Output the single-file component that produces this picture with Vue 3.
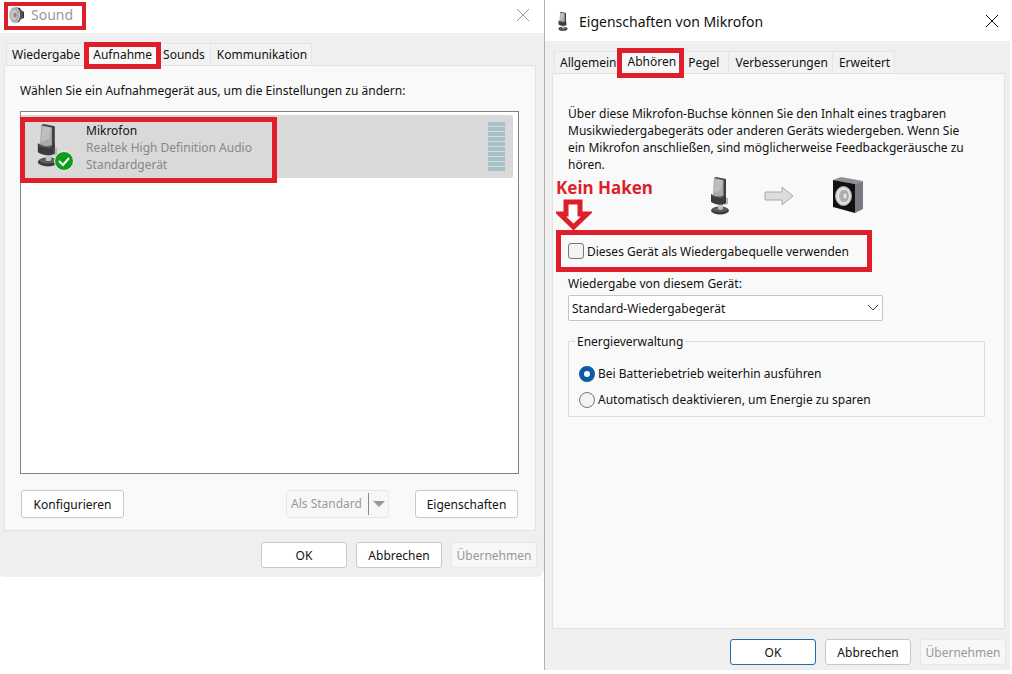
<script setup>
import { ref } from 'vue'

const leftTabs = ['Wiedergabe', 'Aufnahme', 'Sounds', 'Kommunikation']
const rightTabs = ['Allgemein', 'Abhören', 'Pegel', 'Verbesserungen', 'Erweitert']
const leftTab = ref('Aufnahme')
const rightTab = ref('Abhören')
const listen = ref(false)
const device = ref('Standard-Wiedergabegerät')
const power = ref('keep')
</script>

<template>
  <svg class="defs" aria-hidden="true">
    <symbol id="mic" viewBox="0 0 20 38">
      <ellipse cx="10" cy="33.500" rx="9" ry="4" fill="#3a3a3a" />
      <ellipse cx="10" cy="32.500" rx="7.500" ry="2.500" fill="#5c5c5c" />
      <path d="M8 25h5v7c-1 1-4 1-5 0z" fill="#c4c4c4" />
      <path d="M14 20l4 1v6l-4 1z" fill="#b5b5b5" />
      <path d="M4 1L6 0l10 2v19l-3 1z" fill="#3f3f3f" />
      <path d="M4 1l9.500 2v17L3 18z" fill="#a9a9a9" />
      <path d="M5 2l7.500 1.500L11 13l-7 3z" fill="#bebebe" />
      <path d="M1 17c4 2 8 3 12 2l3-1v8l-3 1.500C8 28 4 27 1 25z" fill="#3b3b3b" />
      <path d="M2 18.500c4 1.500 8 2 11 1.500" stroke="#6f6f6f" fill="none" />
    </symbol>
  </svg>
  <main class="desktop">
    <section class="window sound" aria-label="Sound">
      <header class="titlebar">
        <div class="title marked">
          <svg class="speaker-small" viewBox="0 0 16 18">
            <path d="M6 1l5 1 1 2 3 2v6l-3 1-2 3-4 1z" fill="#2f2f2f" />
            <path d="M11 3v11M13 5v7" stroke="#777" />
            <ellipse cx="5.500" cy="9" rx="5" ry="8" fill="#aaa" stroke="#d8d8d8" />
            <ellipse cx="5" cy="9" rx="3" ry="5.500" fill="#c8c8c8" />
            <ellipse cx="6" cy="9" rx="1.500" ry="2.500" fill="#888" />
          </svg>
          <h1>Sound</h1>
        </div>
        <button class="close" aria-label="Schließen"><svg viewBox="0 0 12 12"><path d="M0 0l12 12M12 0L0 12" /></svg></button>
      </header>
      <nav class="tabs">
        <button v-for="t in leftTabs" :key="t" class="tab" :class="{ active: t === leftTab }" @click="leftTab = t">{{ t }}</button>
      </nav>
      <div class="panel">
        <p class="hint">Wählen Sie ein Aufnahmegerät aus, um die Einstellungen zu ändern:</p>
        <div class="list">
          <div class="item">
            <div class="item-icon">
              <svg class="mic-list"><use href="#mic" /></svg>
              <svg class="check" viewBox="0 0 20 20"><circle cx="10" cy="10" r="9.500" fill="#119c1c" stroke="#e8f5e8" /><path d="M5 10l4 4 6-7" fill="none" stroke="#fff" stroke-width="2" /></svg>
            </div>
            <div class="item-text">
              <strong>Mikrofon</strong>
              <span>Realtek High Definition Audio</span>
              <span>Standardgerät</span>
            </div>
            <div class="meter"><i v-for="n in 10" :key="n"></i></div>
          </div>
        </div>
        <div class="actions">
          <button class="btn wide">Konfigurieren</button>
          <span class="grow"></span>
          <button class="btn wide split" disabled><span>Als Standard</span><i class="caret"></i></button>
          <button class="btn wide">Eigenschaften</button>
        </div>
      </div>
      <footer class="footer">
        <button class="btn">OK</button>
        <button class="btn">Abbrechen</button>
        <button class="btn" disabled>Übernehmen</button>
      </footer>
    </section>

    <section class="window props" aria-label="Eigenschaften von Mikrofon">
      <header class="titlebar">
        <div class="title">
          <svg class="mic-title"><use href="#mic" /></svg>
          <h1>Eigenschaften von Mikrofon</h1>
        </div>
        <button class="close" aria-label="Schließen"><svg viewBox="0 0 12 12"><path d="M0 0l12 12M12 0L0 12" /></svg></button>
      </header>
      <nav class="tabs">
        <button v-for="t in rightTabs" :key="t" class="tab" :class="{ active: t === rightTab }" @click="rightTab = t">{{ t }}</button>
      </nav>
      <div class="panel">
        <p class="intro">Über diese Mikrofon-Buchse können Sie den Inhalt eines tragbaren Musikwiedergabegeräts oder anderen Geräts wiedergeben. Wenn Sie ein Mikrofon anschließen, sind möglicherweise Feedbackgeräusche zu hören.</p>
        <div class="flow">
          <svg class="mic-flow"><use href="#mic" /></svg>
          <svg class="arrow" viewBox="0 0 30 20">
            <path d="M1 6h17V1l11 9-11 9v-5H1z" fill="#dcdcdc" stroke="#aaa" />
          </svg>
          <svg class="box" viewBox="0 0 32 36">
            <path d="M1 3L9 0l22 4-8 3z" fill="#8d9096" />
            <path d="M23 7l8-3v28l-8 4z" fill="#777a82" />
            <path d="M1 3l22 4v29L1 30z" fill="#111" />
            <ellipse cx="11.500" cy="19" rx="8" ry="9.500" fill="#ddd" stroke="#aaa" />
            <ellipse cx="12" cy="19" rx="5.500" ry="7" fill="#b0b0b0" stroke="#eee" />
            <ellipse cx="13" cy="19" rx="2.500" ry="3.500" fill="#ddd" stroke="#999" />
          </svg>
          <div class="note">
            <b>Kein Haken</b>
            <svg viewBox="0 0 36 32"><path d="M10 3h14v12h7L17.500 28 4 15h6z" fill="#fff" stroke="#de1f2b" stroke-width="5" /></svg>
          </div>
        </div>
        <label class="listen"><input v-model="listen" type="checkbox"><span>Dieses Gerät als Wiedergabequelle verwenden</span></label>
        <label class="device-label" for="device">Wiedergabe von diesem Gerät:</label>
        <div class="select">
          <select id="device" v-model="device"><option>Standard-Wiedergabegerät</option></select>
          <svg viewBox="0 0 10 6"><path d="M0 0l5 5 5-5" /></svg>
        </div>
        <fieldset>
          <legend>Energieverwaltung</legend>
          <label><input v-model="power" type="radio" name="power" value="keep"><span>Bei Batteriebetrieb weiterhin ausführen</span></label>
          <label><input v-model="power" type="radio" name="power" value="off"><span>Automatisch deaktivieren, um Energie zu sparen</span></label>
        </fieldset>
      </div>
      <footer class="footer">
        <button class="btn primary">OK</button>
        <button class="btn">Abbrechen</button>
        <button class="btn" disabled>Übernehmen</button>
      </footer>
    </section>
  </main>
</template>

<style>
body { margin: 0; background: #fff; }
</style>

<style scoped>
*, *::after { box-sizing: border-box; }
.defs { position: absolute; width: 0; height: 0; }
.desktop {
  display: grid;
  grid-template-columns: 544fr 466fr;
  align-items: start;
  padding-right: 2px;
  font: 12px/17px "Noto Sans", "Open Sans", sans-serif;
  color: #111;
}
button, select { font: inherit; color: inherit; }
h1, p { margin: 0; font: inherit; }
.window { background: #efefef; display: flex; flex-direction: column; min-width: 0; }
.sound { border-radius: 0 0 8px 4px; }
.props { border-left: 1px solid #b0b0b0; }
.titlebar { display: flex; justify-content: space-between; align-items: center; background: #fff; height: 33px; }
.props .titlebar { height: 41px; padding-top: 3px; }
.title { display: flex; align-items: center; }
.title h1 { font-size: 14px; line-height: 19px; }
.marked { border: 4px solid #de1f2b; margin-left: 4px; margin-bottom: 2px; padding: 0 9px 2px 1px; height: 28px; gap: 6px; }
.marked h1 { color: #999; }
.speaker-small { width: 16px; height: 18px; }
.props .title { padding: 0 0 2px 13px; gap: 11px; }
.mic-title { width: 10px; height: 19px; }
.close { border: 0; background: none; padding: 0; width: 12px; height: 12px; margin: 0 15px 4px 0; }
.props .close { margin: 0 12px 2px 0; }
.close svg { display: block; width: 12px; height: 12px; fill: none; stroke: #999; overflow: visible; }
.props .close svg { stroke: #111; }
.tabs { display: flex; align-items: flex-end; height: 32px; padding-left: 6px; }
.props .tabs { padding-left: 9px; }
.tab { border: 1px solid #e5e5e5; border-bottom: 0; border-left: 0; background: #f2f2f2; height: 22px; padding: 0 4px 0 6px; white-space: nowrap; }
.tab:first-child { border-left: 1px solid #e5e5e5; padding: 0 5px; }
.tab.active { border: 5px solid #de1f2b; background: #f9f9f9; height: 27px; margin: 0 0 -4px -2px; padding: 0 4px 3px; line-height: 13px; position: relative; }
.props .tab.active { height: 30px; margin: 0 0 -5px -6px; padding: 0 3px 4px 6px; }
.sound .tab.active + .tab { padding: 0 5px 0 2px; }
.props .tab.active + .tab { padding: 0 9px 0 4px; }
.panel { background: #f9f9f9; border: 1px solid #e2e2e2; margin: 0 8px 0 4px; display: flex; flex-direction: column; }
.sound .panel { padding: 16px 16px 12px 15px; }
.props .panel { margin: 0 5px 0 7px; padding: 31px 19px 0 15px; min-height: 556px; }
.intro { padding-right: 8px; }
.list { margin-top: 12px; background: #fff; border: 1px solid #828282; min-height: 363px; padding: 3px 5px 0 0; }
.sound .panel { margin-right: 8px; padding-right: 16px; }
.item { position: relative; display: flex; background: #d9d9d9; border-radius: 2px; height: 63px; padding: 7px 8px 0 15px; }
.item::after { content: ""; position: absolute; left: -1px; top: 2px; width: 257px; height: 66px; border: 5px solid #de1f2b; }
.item-icon { position: relative; width: 50px; }
.mic-list { display: block; width: 24px; height: 43px; margin-top: 2px; }
.check { position: absolute; left: 18px; top: 29px; width: 20px; height: 20px; }
.item-text { display: flex; flex-direction: column; flex: 1; color: #888; }
.item-text strong { font-weight: 400; color: #111; }
.meter { width: 17px; display: flex; flex-direction: column; gap: 1px; }
.meter i { height: 4px; background: #a5c1c7; }
.actions { display: flex; margin-top: 16px; padding: 0 1px; }
.grow { flex: 1; }
.btn { width: 86px; height: 26px; padding: 0; border: 1px solid #c8c8c8; border-radius: 3px; background: #fff; white-space: nowrap; }
.btn:disabled { color: #999; background: #f7f7f7; border-color: #e8e8e8; }
.btn.wide { width: 103px; height: 28px; }
.btn.primary { border-color: #1f6fae; }
.split { display: flex; align-items: center; justify-content: space-between; margin-right: 26px; padding: 0 3px 0 4px; }
.split span { border-right: 1px solid #888; padding-right: 6px; line-height: 22px; }
.caret { border: 6px solid transparent; border-top-color: #999; border-bottom: 0; }
.footer { display: flex; justify-content: flex-end; gap: 9px; padding: 11px 7px 9px 0; }
.props .footer { padding: 10px 4px 5px 0; }
.flow { position: relative; height: 57px; display: flex; gap: 34px; padding: 4px 0 0 142px; }
.mic-flow { width: 20px; height: 38px; }
.arrow { width: 30px; height: 20px; margin-top: 9px; }
.box { width: 32px; height: 36px; margin-left: 4px; }
.note { position: absolute; left: -12px; top: 4px; color: #de1f2b; font-size: 17px; line-height: 22px; }
.note b { display: block; font-weight: 700; }
.note svg { display: block; width: 36px; height: 32px; }
.listen { position: relative; align-self: flex-start; border: 5px solid #de1f2b; margin-left: -12px; height: 42px; width: 316px; display: flex; align-items: center; padding-left: 7px; gap: 3px; background: #f9f9f9; }
input { appearance: none; margin: 0; width: 16px; height: 16px; border: 1px solid #777; background: #f3f3f3; flex: none; }
input[type="checkbox"] { border-radius: 3px; }
input[type="radio"] { border-radius: 50%; }
input[type="radio"]:checked { border: 5px solid #0c59a4; background: #fff; }
.device-label { margin-top: 3px; }
.select { position: relative; margin-top: 3px; width: 315px; }
select { appearance: none; display: block; width: 100%; height: 26px; border: 1px solid #c4c4c4; border-radius: 2px; background: #fff; padding: 0 3px; }
.select svg { position: absolute; right: 5px; top: 10px; width: 10px; height: 6px; fill: none; stroke: #444; overflow: visible; }
fieldset { margin: 12px 0 0; border: 1px solid #dcdcdc; padding: 15px 10px 8px; display: flex; flex-direction: column; gap: 9px; min-width: 0; }
legend { padding: 0 2px; margin-left: -4px; }
fieldset label { display: flex; align-items: center; gap: 3px; }
</style>
